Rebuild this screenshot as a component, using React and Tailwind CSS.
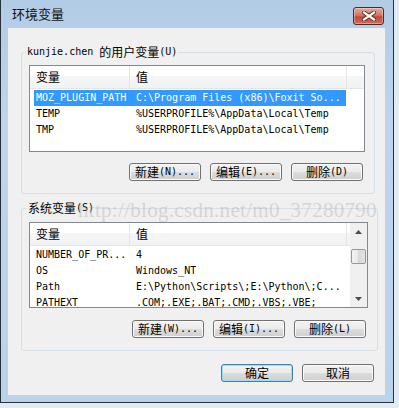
import React from 'react'

const userRows = [
  ['MOZ_PLUGIN_PATH', 'C:\\Program Files (x86)\\Foxit So...', true],
  ['TEMP', '%USERPROFILE%\\AppData\\Local\\Temp'],
  ['TMP', '%USERPROFILE%\\AppData\\Local\\Temp'],
]

const sysRows = [
  ['NUMBER_OF_PR...', '4'],
  ['OS', 'Windows_NT'],
  ['Path', 'E:\\Python\\Scripts\\;E:\\Python\\;C...'],
  ['PATHEXT', '.COM;.EXE;.BAT;.CMD;.VBS;.VBE;'],
]

function Cjk({ children }) {
  return <span className="text-[12px] font-['Noto_Sans_CJK_SC',sans-serif]">{children}</span>
}

function Btn({ children, primary }) {
  return (
    <div
      className={
        primary
          ? 'w-[72px] h-[18px] rounded-[3px] border border-[#3c7fb1] shadow-[inset_0_0_0_1px_#9fdcfa] bg-[linear-gradient(#f2f2f2_0%,#ebebeb_50%,#dddddd_50%,#cfcfcf_100%)] flex items-center justify-center leading-[16px] text-black'
          : 'w-[72px] h-[18px] rounded-[3px] border border-[#707070] shadow-[inset_0_0_0_1px_#fbfbfb] bg-[linear-gradient(#f2f2f2_0%,#ebebeb_50%,#dddddd_50%,#cfcfcf_100%)] flex items-center justify-center leading-[16px] text-black'
      }
    >
      {children}
    </div>
  )
}

function Header() {
  return (
    <div className="h-[23px] flex border-b border-[#e5e5e5] bg-[linear-gradient(#ffffff_0%,#ffffff_45%,#f5f6f7_45%,#f1f2f4_100%)] shrink-0">
      <div className="w-[100px] border-r border-[#e5e5e5] pl-[6px] flex items-center"><Cjk>变量</Cjk></div>
      <div className="w-[217px] border-r border-[#e5e5e5] pl-[6px] flex items-center"><Cjk>值</Cjk></div>
    </div>
  )
}

function Arrow({ up }) {
  return (
    <div className="h-[17px] flex items-center justify-center">
      <svg width="7" height="4" viewBox="0 0 7 4">
        {up ? <path d="M0 4 L3.5 0 L7 4 Z" fill="#4d4d4d" /> : <path d="M0 0 L3.5 4 L7 0 Z" fill="#4d4d4d" />}
      </svg>
    </div>
  )
}

function Scrollbar() {
  return (
    <div className="w-[17px] shrink-0 bg-[#f0f0f0] flex flex-col">
      <Arrow up />
      <div className="flex-1">
        <div className="mt-[9px] mx-[1px] h-[15px] rounded-[2px] border border-[#979797] bg-[linear-gradient(90deg,#f3f3f3,#e8e8e8_50%,#d9d9d9_50%,#e3e3e3)]" />
      </div>
      <Arrow />
    </div>
  )
}

function VarList({ rows, scroll, h }) {
  return (
    <div className={`ml-[7px] mr-[9px] ${h} border border-[#828790] bg-white flex overflow-hidden`}>
      <div className="flex-1 min-w-0 flex flex-col">
        <Header />
        <div className="pt-[1px]">
          {rows.map(([name, value, sel]) => (
            <div
              key={name}
              className={
                sel
                  ? 'mx-[4px] w-[312px] h-[16px] shrink-0 flex items-center bg-[#3399ff] text-white whitespace-nowrap'
                  : 'mx-[4px] w-[312px] h-[16px] shrink-0 flex items-center text-black whitespace-nowrap'
              }
            >
              <div className="w-[100px] pl-[2px] shrink-0">{name}</div>
              <div className="pl-[2px] overflow-hidden">{value}</div>
            </div>
          ))}
        </div>
      </div>
      {scroll && <Scrollbar />}
    </div>
  )
}

function CloseIcon() {
  return (
    <svg width="14" height="10" viewBox="0 0 14 10">
      <path d="M2 1.5 L12 8.5 M12 1.5 L2 8.5" stroke="#5a2420" strokeWidth="4" strokeLinecap="square" />
      <path d="M2 1.5 L12 8.5 M12 1.5 L2 8.5" stroke="#ffffff" strokeWidth="2.2" strokeLinecap="square" />
    </svg>
  )
}

export default function App() {
  return (
    <div className="w-[399px] h-[408px] bg-[#e2eaf2] relative overflow-hidden text-[10px] leading-[16px] font-['DejaVu_Sans_Mono','Noto_Sans_CJK_SC',monospace]">
      <div className="w-[394px] h-[403px] border-x border-b border-[#2a3038] bg-[linear-gradient(#b3cce6,#bdd4ec_30%,#bad2ea)] flex flex-col">
        {/* title bar */}
        <div className="h-[28px] shrink-0 flex items-start justify-between">
          <div className="pl-[11px] pt-[5px] text-[13px] leading-[18px] text-[#111] font-['Noto_Sans_CJK_SC',sans-serif]">环境变量</div>
          <div className="mt-[7px] mr-[9px] w-[31px] h-[18px] rounded-[3px] border border-[#4b2a2a] bg-[linear-gradient(#e8a89c,#d0786a_45%,#c04a3c_55%,#d46a58)] shadow-[inset_0_0_0_1px_rgba(255,255,255,0.35)] flex items-center justify-center">
            <CloseIcon />
          </div>
        </div>

        {/* client */}
        <div className="ml-[7px] mr-[8px] h-[367px] shrink-0 bg-[#f0f0f0] pt-[17px] flex flex-col">
          <fieldset className="shrink-0 ml-[13px] mr-[10px] border border-[#d5dfe5] rounded-[3px] pb-[12px]">
            <legend className="ml-[4px] px-[1px] h-[14px] flex items-center leading-[14px] text-black whitespace-pre">
              kunjie.chen <Cjk>的用户变量</Cjk>(U)
            </legend>
            <div className="mt-[6px]">
              <VarList rows={userRows} h="h-[87px]" />
            </div>
            <div className="mt-[11px] mr-[11px] flex justify-end gap-[9px]">
              <Btn><Cjk>新建</Cjk>(N)...</Btn>
              <Btn><Cjk>编辑</Cjk>(E)...</Btn>
              <Btn><Cjk>删除</Cjk>(D)</Btn>
            </div>
          </fieldset>

          <fieldset className="shrink-0 mt-[7px] ml-[13px] mr-[10px] border border-[#d5dfe5] rounded-[3px] pb-[12px]">
            <legend className="ml-[5px] px-[1px] h-[14px] flex items-center leading-[14px] text-black">
              <Cjk>系统变量</Cjk>(S)
            </legend>
            <div className="mt-[7px]">
              <VarList rows={sysRows} scroll h="h-[86px]" />
            </div>
            <div className="mt-[12px] mr-[11px] flex justify-end gap-[9px]">
              <Btn><Cjk>新建</Cjk>(W)...</Btn>
              <Btn><Cjk>编辑</Cjk>(I)...</Btn>
              <Btn><Cjk>删除</Cjk>(L)</Btn>
            </div>
          </fieldset>

          <div className="mt-[13px] mr-[11px] flex justify-end gap-[9px]">
            <Btn primary><Cjk>确定</Cjk></Btn>
            <Btn><Cjk>取消</Cjk></Btn>
          </div>
        </div>
      </div>

      {/* watermark */}
      <div className="absolute left-[78px] top-[200px] text-[21px] leading-[21px] tracking-[0.3px] text-[rgba(170,170,170,0.4)] font-['Liberation_Serif',serif] whitespace-nowrap pointer-events-none">
        http://blog.csdn.net/m0_37280790
      </div>
    </div>
  )
}
